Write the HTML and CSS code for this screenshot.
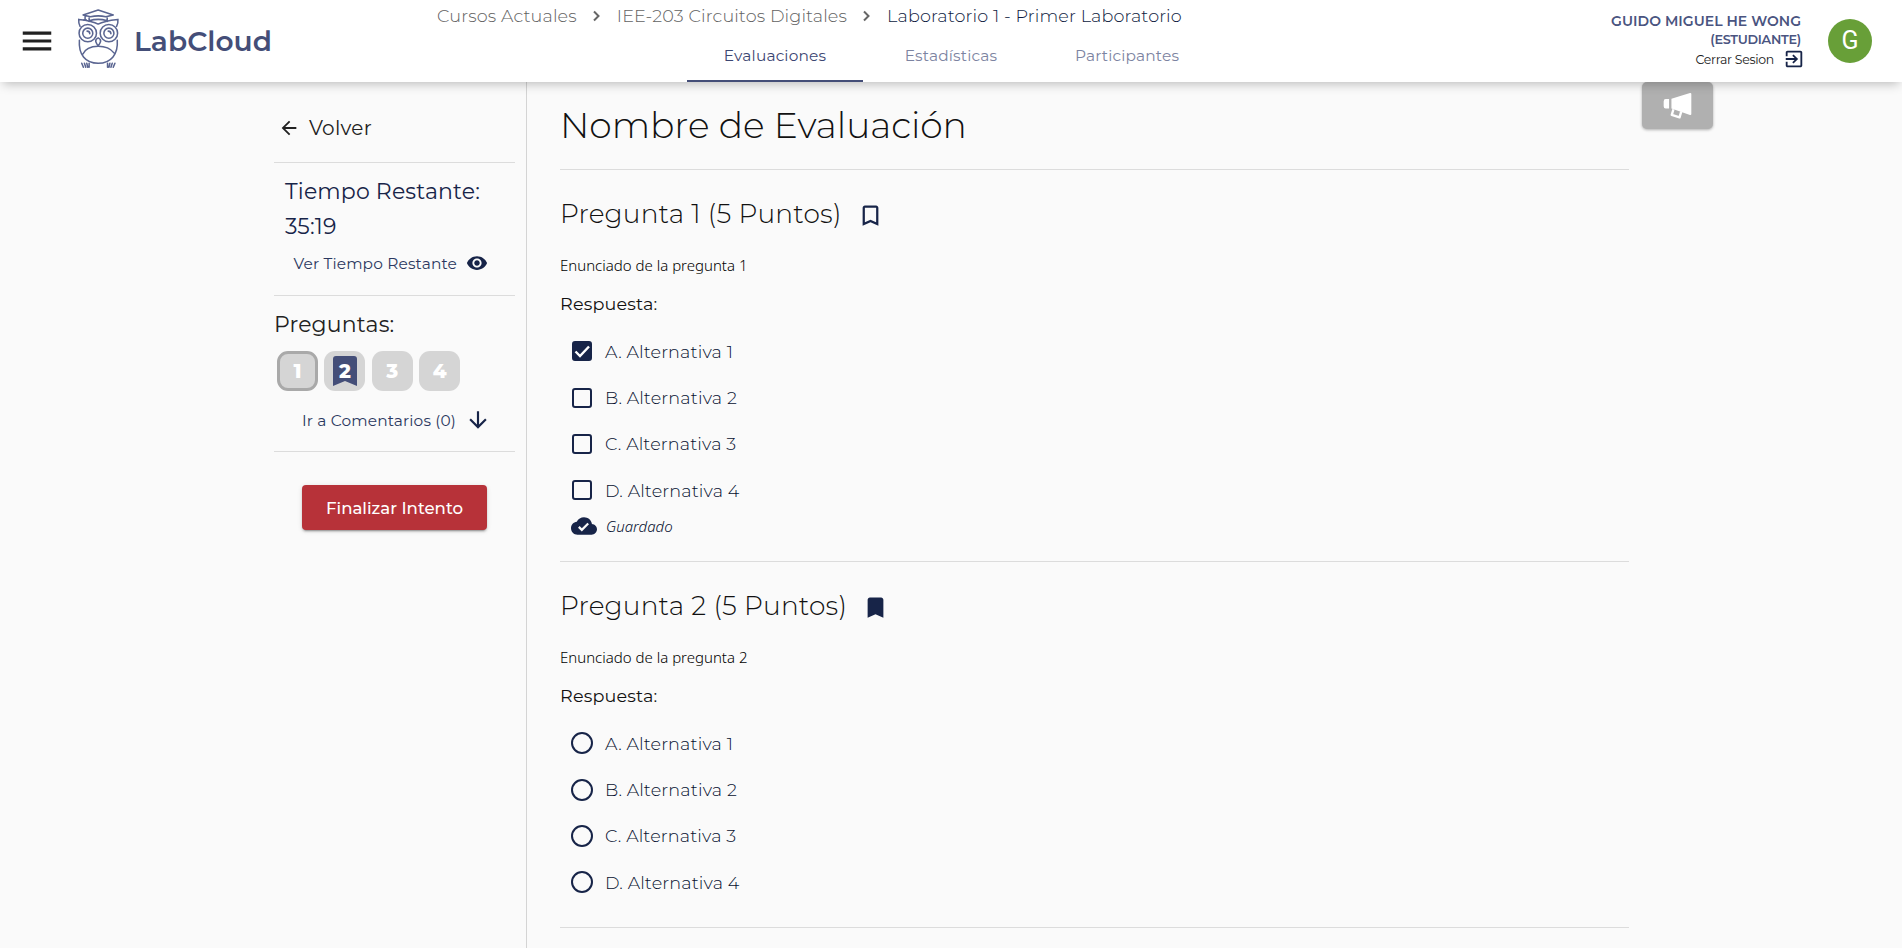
FILE: index.html
```html
<!DOCTYPE html>
<html lang="es">
<head>
<meta charset="utf-8">
<title>LabCloud</title>
<link rel="stylesheet" href="styles.css">
</head>
<body>
<header class="appbar">
  <div class="brand">
    <svg class="menu" viewBox="0 0 24 24"><path d="M3 18h18v-2H3v2zm0-5h18v-2H3v2zm0-7v2h18V6H3z"/></svg>
    <svg class="owl" viewBox="232 22 128 182">
      <path d="M250 43L295 28L340 43L318 48Q295 43 272 48ZM268 48V62M322 48V62M268 60Q295 52 322 60M256 44V58M252 58H260"/>
      <path d="M237 56Q258 58 272 62Q287 65 295 70Q303 65 318 62Q332 58 354 56Q355 68 350 77M237 56Q236 68 241 77"/>
      <circle cx="264" cy="97" r="26"/><circle cx="327" cy="97" r="26"/>
      <circle cx="264" cy="97" r="15"/><circle cx="327" cy="97" r="15"/>
      <path d="M262 91Q270 91 270 99M325 91Q333 91 333 99"/>
      <path d="M295 111Q304 115 302 123Q299 131 295 135Q291 131 288 123Q286 115 295 111Z"/>
      <path d="M239 118C236 160 256 187 295 187S355 160 352 118M249 160C256 144 275 136 295 136S333 144 342 156"/>
      <path d="M246 187l5 12M254 187l4 12M261 187l3 12M268 187v12M345 187l-5 12M337 187l-4 12M330 187l-3 12M323 187v12"/>
    </svg>
    <span class="brand-name">LabCloud</span>
  </div>
  <div class="center">
    <nav class="crumbs">
      <a class="crumb">Cursos Actuales</a>
      <svg class="chev" viewBox="0 0 7 12"><path d="M1 1.5L5.5 6L1 10.5"/></svg>
      <a class="crumb">IEE-203 Circuitos Digitales</a>
      <svg class="chev" viewBox="0 0 7 12"><path d="M1 1.5L5.5 6L1 10.5"/></svg>
      <a class="crumb current">Laboratorio 1 - Primer Laboratorio</a>
    </nav>
    <nav class="tabs">
      <a class="tab active">Evaluaciones</a>
      <a class="tab">Estadísticas</a>
      <a class="tab">Participantes</a>
    </nav>
  </div>
  <div class="user">
    <div class="user-info">
      <span class="user-name">GUIDO MIGUEL HE WONG</span>
      <span class="user-role">(ESTUDIANTE)</span>
      <a class="logout"><span>Cerrar Sesion</span>
        <svg viewBox="0 0 24 24"><path d="M10.09 15.59L11.5 17l5-5-5-5-1.41 1.41L12.67 11H3v2h9.67l-2.58 2.59zM19 3H5c-1.11 0-2 .9-2 2v4h2V5h14v14H5v-4H3v4c0 1.1.89 2 2 2h14c1.1 0 2-.9 2-2V5c0-1.1-.9-2-2-2z"/></svg>
      </a>
    </div>
    <div class="avatar">G</div>
  </div>
</header>
<div class="page">
  <aside class="sidebar">
    <a class="back">
      <svg viewBox="0 0 24 24"><path d="M20 11H7.83l5.59-5.59L12 4l-8 8 8 8 1.41-1.41L7.83 13H20v-2z"/></svg>
      <span>Volver</span>
    </a>
    <section class="timer">
      <div class="timer-text">Tiempo Restante:<br>35:19</div>
      <a class="side-link"><span>Ver Tiempo Restante</span>
        <svg class="eye" viewBox="0 0 24 24"><path d="M12 4.5C7 4.5 2.73 7.61 1 12c1.73 4.39 6 7.5 11 7.5s9.27-3.11 11-7.5c-1.73-4.39-6-7.5-11-7.5zM12 17c-2.76 0-5-2.24-5-5s2.24-5 5-5 5 2.24 5 5-2.24 5-5 5zm0-8c-1.66 0-3 1.34-3 3s1.34 3 3 3 3-1.34 3-3-1.34-3-3-3z"/></svg>
      </a>
    </section>
    <section class="questions-nav">
      <h3 class="nav-title">Preguntas:</h3>
      <div class="numbers">
        <a class="number selected">1</a>
        <a class="number marked"><svg viewBox="0 0 24 30"><path d="M3 0H21Q24 0 24 3V30L12 25L0 30V3Q0 0 3 0Z"/></svg><span>2</span></a>
        <a class="number">3</a>
        <a class="number">4</a>
      </div>
      <a class="side-link"><span>Ir a Comentarios (0)</span>
        <svg class="down" viewBox="0 0 24 24"><path d="M20 12l-1.41-1.41L13 16.17V4h-2v12.17l-5.58-5.59L4 12l8 8 8-8z"/></svg>
      </a>
    </section>
    <button class="finish">Finalizar Intento</button>
  </aside>
  <main class="content">
    <h1 class="title">Nombre de Evaluación</h1>
    <section class="question">
      <h2 class="q-title"><span>Pregunta 1 (5 Puntos)</span>
        <svg viewBox="0 0 24 24"><path d="M17 3H7c-1.1 0-1.99.9-1.99 2L5 21l7-3 7 3V5c0-1.1-.9-2-2-2zm0 15l-5-2.18L7 18V5h10v13z"/></svg></h2>
      <p class="statement">Enunciado de la pregunta 1</p>
      <p class="answer">Respuesta:</p>
      <label class="option"><i class="box checked"><svg viewBox="0 0 20 20"><path d="M3.5 10.5L8 15L17 5.5"/></svg></i><span>A. Alternativa 1</span></label>
      <label class="option"><i class="box"></i><span>B. Alternativa 2</span></label>
      <label class="option"><i class="box"></i><span>C. Alternativa 3</span></label>
      <label class="option"><i class="box"></i><span>D. Alternativa 4</span></label>
      <div class="saved">
        <svg viewBox="0 0 24 24"><path d="M19.35 10.04C18.67 6.59 15.64 4 12 4 9.11 4 6.6 5.64 5.35 8.04 2.34 8.36 0 10.91 0 14c0 3.31 2.69 6 6 6h13c2.76 0 5-2.24 5-5 0-2.64-2.05-4.78-4.65-4.96zM10 17l-3.5-3.5 1.41-1.41L10 14.17 15.18 9l1.41 1.41L10 17z"/></svg>
        <em>Guardado</em>
      </div>
    </section>
    <section class="question second">
      <h2 class="q-title"><span>Pregunta 2 (5 Puntos)</span>
        <svg viewBox="0 0 24 24"><path d="M17 3H7c-1.1 0-1.99.9-1.99 2L5 21l7-3 7 3V5c0-1.1-.9-2-2-2z"/></svg></h2>
      <p class="statement">Enunciado de la pregunta 2</p>
      <p class="answer">Respuesta:</p>
      <label class="option"><i class="radio"></i><span>A. Alternativa 1</span></label>
      <label class="option"><i class="radio"></i><span>B. Alternativa 2</span></label>
      <label class="option"><i class="radio"></i><span>C. Alternativa 3</span></label>
      <label class="option"><i class="radio"></i><span>D. Alternativa 4</span></label>
    </section>
  </main>
  <div class="announce"><svg viewBox="310 276 86 80"><path d="M318 297H328V325H318Q312 325 312 318V304Q312 297 318 297ZM335 296L390 279Q394 278 394 282V341Q394 345 390 344L335 325Z"/><path class="handle" d="M341 327L336 344L359 351L364 334"/></svg></div>
</div>
</body>
</html>
```
FILE: styles.css
```css
* { box-sizing: border-box; }
body { margin: 0; height: 948px; overflow: hidden; background: #fafafa; color: #212121; font-family: Montserrat, Inter, sans-serif; }
h1, h2, h3, p { margin: 0; font-weight: 400; }
span, em, a { white-space: nowrap; }
svg { display: block; flex: none; fill: #172448; }
.appbar { position: relative; z-index: 1; display: grid; grid-template-columns: 436px 1fr 436px; height: 82px; background: #fff; box-shadow: 0 5px 10px -3px rgba(0,0,0,.25); }
.brand { display: flex; align-items: center; padding-left: 18px; }
.menu { width: 38px; height: 38px; fill: #212121; }
.owl { width: 43px; height: 61px; margin: -6px 0 0 21px; fill: none; stroke: #5a6591; stroke-width: 4.6; stroke-linecap: round; stroke-linejoin: round; }
.brand-name { margin-left: 14px; font-size: 28px; font-weight: 600; letter-spacing: .05px; color: #444e78; }
.crumbs { display: flex; align-items: center; height: 32px; padding: 0 0 1px 1px; font-size: 17.6px; font-weight: 300; letter-spacing: .14px; color: #626262; }
.current { color: #0d1a40; }
.chev { width: 7px; height: 12px; margin: 0 17px 0 16px; fill: none; stroke: #666; stroke-width: 2; }
.tabs { display: flex; justify-content: center; height: 50px; }
.tab { display: flex; align-items: center; justify-content: center; width: 176px; padding-bottom: 1px; border-bottom: 2px solid transparent; font-size: 15.4px; letter-spacing: .165px; color: #7c83a1; }
.active { color: #3c4672; border-color: #444e78; }
.user { display: flex; justify-content: flex-end; padding-right: 30px; }
.user-info { display: flex; flex-direction: column; align-items: flex-end; padding-top: 11px; margin-right: 27px; color: #4a5480; font-weight: 600; }
.user-name { font-size: 14px; line-height: 20px; letter-spacing: .04px; }
.user-role { font-size: 12.8px; line-height: 17px; letter-spacing: -.26px; }
.logout { display: flex; align-items: center; height: 22px; margin-right: -4px; font-size: 12.5px; font-weight: 400; letter-spacing: -.29px; color: #212121; }
.logout svg { width: 22px; height: 22px; margin-left: 9px; }
.avatar { width: 44px; height: 44px; margin-top: 19px; border-radius: 50%; background: #689f38; color: #fff; font: 400 25px/44px Roboto, sans-serif; text-align: center; }
.page { display: flex; height: 866px; }
.sidebar { width: 527px; padding: 0 11px 0 274px; border-right: 1px solid #d4d4d4; flex: none; }
.back { display: flex; align-items: center; height: 81px; padding: 12px 0 0 8px; border-bottom: 1px solid #dcdcdc; font-size: 20px; letter-spacing: .25px; }
.back svg { width: 22px; height: 22px; margin: 0 9px 0 -4px; fill: #212121; }
.timer { height: 133px; padding-top: 11px; border-bottom: 1px solid #dcdcdc; }
.timer-text { padding-left: 11px; font-size: 22px; line-height: 35px; letter-spacing: .165px; color: #172448; }
.side-link { display: flex; align-items: center; justify-content: flex-end; height: 38px; padding-right: 27px; font-size: 15.4px; letter-spacing: .15px; color: #2b3860; }
.eye { width: 22px; height: 22px; margin-left: 9px; }
.questions-nav { height: 156px; padding-top: 9px; border-bottom: 1px solid #dcdcdc; }
.nav-title { font-size: 22px; line-height: 40px; letter-spacing: .165px; }
.numbers { display: flex; gap: 6.4px; margin: 6px 0 10px 3px; }
.number { position: relative; display: flex; align-items: center; justify-content: center; width: 41px; height: 40px; border-radius: 11px; background: #d5d5d5; color: #fff; font-size: 19.8px; font-weight: 800; }
.selected { border: 3px solid #a9a9a9; }
.marked svg { position: absolute; left: 9px; top: 5px; width: 24px; height: 30px; fill: #444e78; }
.marked span { position: relative; }
.down { width: 26px; height: 26px; margin: 0 -3px 0 9px; }
.finish { display: block; width: 185px; height: 45px; margin: 33px 0 0 28px; padding: 0; border: 0; border-radius: 4px; background: #b73239; color: #fff; font: 500 16.6px/46px Montserrat, Inter, sans-serif; box-shadow: 0 3px 1px -2px rgba(0,0,0,.2), 0 2px 2px rgba(0,0,0,.14), 0 1px 5px rgba(0,0,0,.12); }
.content { width: 1069px; margin-left: 33px; }
.title { height: 88px; border-bottom: 1px solid #dcdcdc; font-size: 36.1px; line-height: 86px; font-weight: 300; letter-spacing: -.04px; color: #111; }
.question { height: 392px; padding-top: 24px; border-bottom: 1px solid #dcdcdc; }
.second { height: 366px; }
.q-title { display: flex; align-items: center; height: 38px; font-size: 26.4px; font-weight: 300; letter-spacing: .2px; color: #111; }
.q-title svg { width: 27px; height: 27px; margin: 5px 0 0 15px; }
.statement { margin-top: 21px; font: 300 15px/24px "Noto Sans", sans-serif; color: #000; }
.answer { margin-top: 13px; font-size: 17.6px; line-height: 28px; letter-spacing: .165px; color: #111; }
.option { display: flex; align-items: center; height: 46.4px; padding-left: 12px; font-size: 17.6px; font-weight: 300; letter-spacing: .165px; color: #06102f; }
.answer + .option { margin-top: 10px; }
.box { width: 20px; height: 20px; margin-right: 13px; border: 2px solid #172448; border-radius: 3px; }
.checked { background: #172448; }
.checked svg { width: 20px; height: 20px; margin: -2px; fill: none; stroke: #fff; stroke-width: 2.4; }
.radio { width: 22px; height: 22px; margin: 0 12px 0 -1px; border: 2px solid #172448; border-radius: 50%; }
.saved { display: flex; align-items: center; height: 24px; padding-left: 11px; font: 300 15px/24px "Noto Sans", sans-serif; color: #06102f; }
.saved svg { width: 26px; height: 26px; margin-right: 9px; }
.announce { display: flex; align-items: center; justify-content: center; width: 71px; height: 47px; margin-left: 13px; border-radius: 5px; background: #b0b0b0; box-shadow: 0 1px 3px rgba(0,0,0,.3); }
.announce svg { width: 29px; height: 27px; fill: #fff; }
.handle { fill: none; stroke: #fff; stroke-width: 7; stroke-linejoin: round; }
```
